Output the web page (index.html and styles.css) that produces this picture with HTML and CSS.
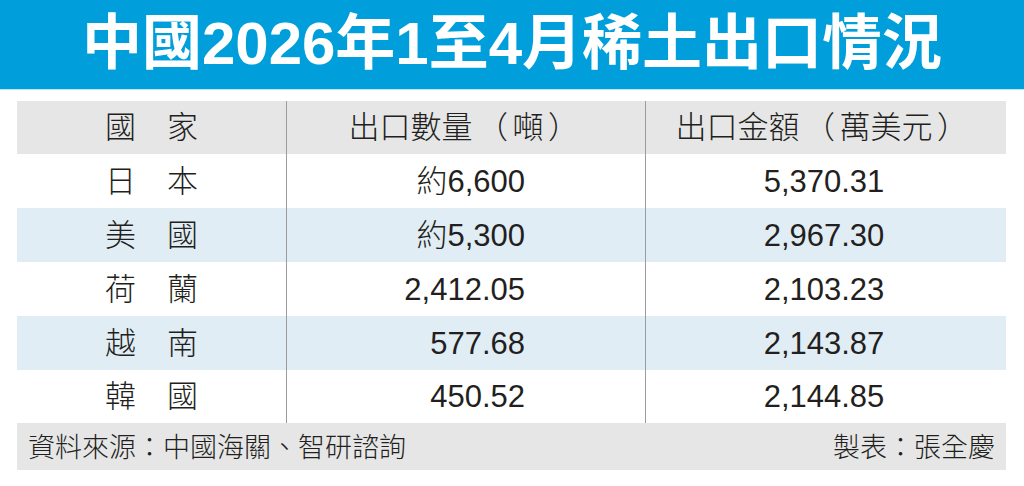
FILE: index.html
```html
<!DOCTYPE html>
<html lang="zh-Hant">
<head>
<meta charset="utf-8">
<title>中國2026年1至4月稀土出口情況</title>
<link rel="stylesheet" href="styles.css">
</head>
<body>
<header class="title-bar">
  <h1 class="title">中國2026年1至4月稀土出口情況</h1>
</header>
<main class="table">
  <div class="row head">
    <div class="cell c1">國　家</div>
    <div class="cell c2 center">出口數量<span class="paren">（</span>噸<span class="paren">）</span></div>
    <div class="cell c3">出口金額<span class="paren">（</span>萬美元<span class="paren">）</span></div>
  </div>
  <div class="row">
    <div class="cell c1">日　本</div>
    <div class="cell c2">約6,600</div>
    <div class="cell c3">5,370.31</div>
  </div>
  <div class="row alt">
    <div class="cell c1">美　國</div>
    <div class="cell c2">約5,300</div>
    <div class="cell c3">2,967.30</div>
  </div>
  <div class="row">
    <div class="cell c1">荷　蘭</div>
    <div class="cell c2">2,412.05</div>
    <div class="cell c3">2,103.23</div>
  </div>
  <div class="row alt">
    <div class="cell c1">越　南</div>
    <div class="cell c2">577.68</div>
    <div class="cell c3">2,143.87</div>
  </div>
  <div class="row last">
    <div class="cell c1">韓　國</div>
    <div class="cell c2">450.52</div>
    <div class="cell c3">2,144.85</div>
  </div>
  <div class="foot">
    <span>資料來源：中國海關、智研諮詢</span>
    <span>製表：張全慶</span>
  </div>
</main>
</body>
</html>
```
FILE: styles.css
```css
* { box-sizing: border-box; }
html, body { margin: 0; padding: 0; background: #ffffff; }
body {
  width: 1024px;
  height: 486px;
  overflow: hidden;
  font-family: "Liberation Sans", "Noto Sans CJK TC", sans-serif;
  color: #231f20;
  text-spacing-trim: space-all;
}
.title-bar {
  height: 90px;
  background: #009fdb;
  border-bottom: 1px solid #bfe4f5;
  display: flex;
  align-items: center;
  justify-content: center;
}
.title {
  margin: 0;
  color: #ffffff;
  font-family: "Liberation Sans", "Noto Sans CJK TC", sans-serif;
  font-weight: 700;
  font-size: 60px;
  line-height: 1;
  padding-bottom: 2px;
}
.table {
  margin: 11px 0 0 17px;
  width: 989px;
  display: flex;
  flex-direction: column;
}
.row {
  display: grid;
  grid-template-columns: 269px 359px 361px;
  height: 54px;
  background: #ffffff;
}
.row.head { background: #e6e6e7; height: 53px; }
.row.alt { background: #e1edf5; }
.row.last { height: 53px; }
.cell {
  display: flex;
  align-items: center;
  font-size: 31px;
  font-weight: 300;
  line-height: 1;
}
.paren { padding: 0 4.5px; }
.c1 { justify-content: center; }
.c2 {
  justify-content: flex-end;
  padding-right: 120px;
  border-left: 1.5px solid #9c9c9c;
}
.c2.center { justify-content: center; padding-right: 0; }
.c3 {
  justify-content: center;
  border-left: 1.5px solid #9c9c9c;
  padding-right: 4px;
}
.foot {
  height: 47px;
  background: #e6e6e7;
  display: flex;
  align-items: center;
  justify-content: space-between;
  padding: 3px 11px 0 11px;
  font-size: 27px;
  font-weight: 300;
  line-height: 1;
}
```
